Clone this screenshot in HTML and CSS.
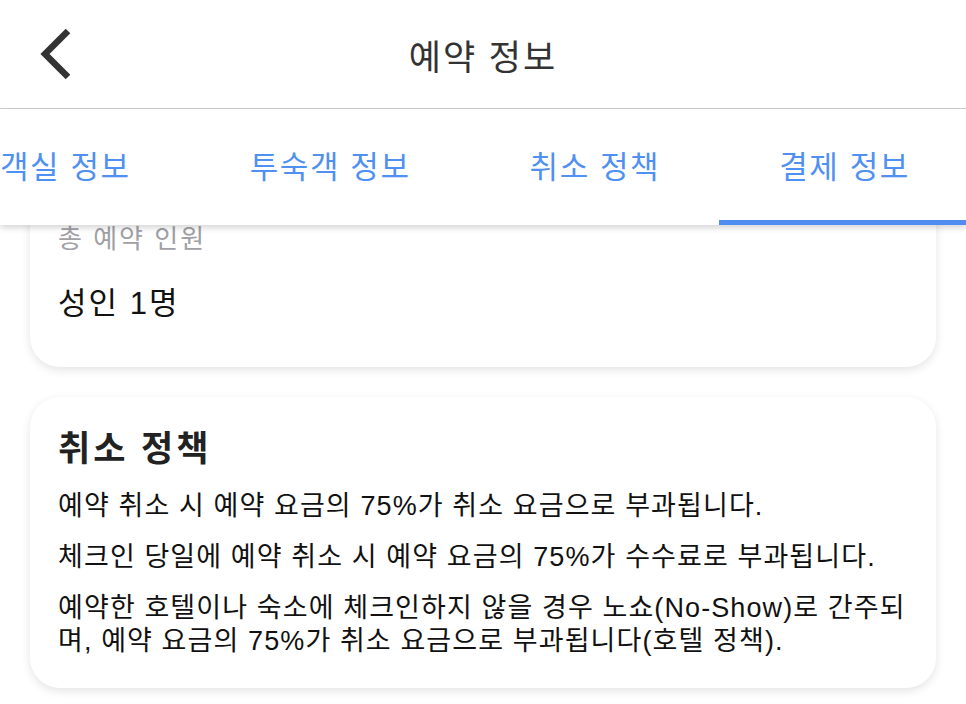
FILE: index.html
```html
<!DOCTYPE html>
<html lang="ko">

<head>
    <meta charset="UTF-8">
    <meta name="viewport" content="width=device-width, initial-scale=1.0">
    <title>예약 정보</title>
    <link rel="stylesheet" href="styles.css">
</head>

<body>

    <header class="top-bar">
        <a class="back-btn" href="#">
            <svg width="40" height="60" viewBox="0 0 40 60">
                <path d="M30 7 L7 30 L30 53" fill="none" stroke="#333" stroke-width="6.5" />
            </svg>
        </a>
        <h1>예약 정보</h1>
        <span></span>
    </header>

    <!-- Pestañas de secciones -->
    <nav class="tabs">
        <div class="tab-track">
            <a class="tab" href="#">객실 정보</a>
            <a class="tab" href="#">투숙객 정보</a>
            <a class="tab" href="#">취소 정책</a>
            <a class="tab active" href="#">결제 정보</a>
        </div>
    </nav>

    <div class="content">
        <section class="card">
            <div class="label">총 예약 인원</div>
            <div class="value">성인 1명</div>
        </section>

        <section class="card policy">
            <h2>취소 정책</h2>
            <p>예약 취소 시 예약 요금의 75%가 취소 요금으로 부과됩니다.</p>
            <p>체크인 당일에 예약 취소 시 예약 요금의 75%가 수수료로 부과됩니다.</p>
            <p>예약한 호텔이나 숙소에 체크인하지 않을 경우 노쇼(No-Show)로 간주되며, 예약 요금의 75%가 취소 요금으로 부과됩니다(호텔 정책).</p>
        </section>
    </div>

</body>

</html>
```

FILE: styles.css
```css
body {
    font-family: "Liberation Sans", "Noto Sans CJK KR", sans-serif;
    margin: 0;
    padding: 0;
    background-color: #fff;
    color: #111;
    overflow: hidden;
}

/* Barra superior con título centrado */
.top-bar {
    display: grid;
    grid-template-columns: 1fr auto 1fr;
    align-items: center;
    height: 108px;
    border-bottom: 1px solid #cfcfcf;
    background-color: #fff;
}

.back-btn {
    display: flex;
    padding-left: 38px;
}

.top-bar h1 {
    margin: 0;
    font-size: 35px;
    font-weight: normal;
    letter-spacing: 2px;
    color: #333;
}

/* Pestañas (desplazadas a la izquierda) */
.tabs {
    position: relative;
    z-index: 10;
    background-color: #fff;
    box-shadow: 0 3px 6px rgba(0, 0, 0, 0.16);
    overflow: hidden;
}

.tab-track {
    display: flex;
    margin-left: -60px;
}

.tab {
    display: flex;
    align-items: center;
    height: 111px;
    padding: 0 59px 0 60px;
    border-bottom: 5px solid transparent;
    font-size: 31px;
    letter-spacing: 1.6px;
    color: #4f90f2;
    text-decoration: none;
    white-space: nowrap;
}

.tab.active {
    border-bottom-color: #4f8cf0;
}

/* Contenido desplazado bajo las pestañas */
.content {
    margin-top: -34px;
    padding: 0 30px;
}

.card {
    background-color: #fff;
    border-radius: 30px;
    box-shadow: 0 3px 10px rgba(0, 0, 0, 0.11);
    padding: 32px 20px 33px 28px;
    margin-bottom: 30px;
}

.card.policy {
    padding-bottom: 30px;
}

.label {
    font-size: 26px;
    line-height: 32px;
    letter-spacing: 2px;
    color: #a0a0a5;
}

.value {
    margin-top: 29px;
    margin-bottom: 10px;
    font-size: 31px;
    line-height: 40px;
    letter-spacing: 2px;
    color: #111;
}

.card h2 {
    margin: 0 0 21px;
    font-size: 35px;
    line-height: 40px;
    letter-spacing: 3px;
    color: #222;
}

.card p {
    margin: 0 0 18px;
    font-size: 27px;
    line-height: 33px;
    letter-spacing: 1.1px;
}

.card p:last-child {
    margin-bottom: 0;
}
```
